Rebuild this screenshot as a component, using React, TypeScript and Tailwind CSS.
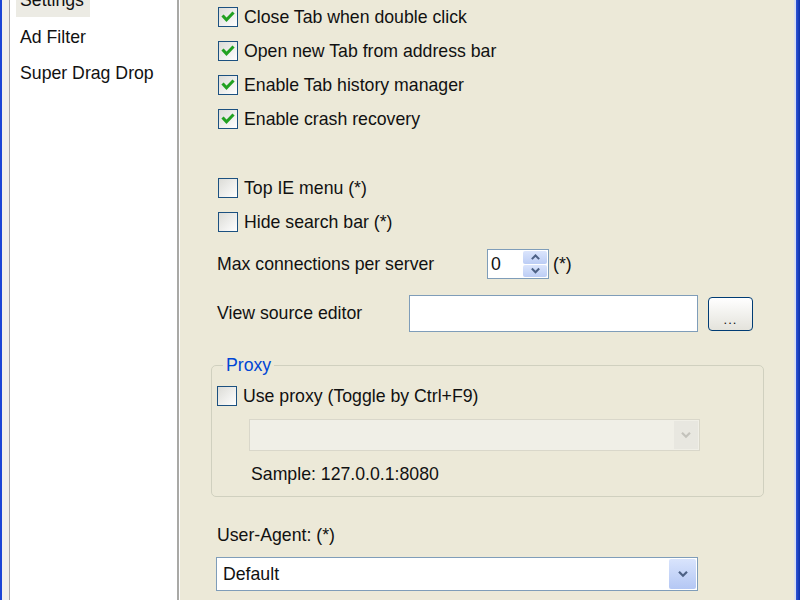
import React from "react";

const FONT = "font-['Liberation_Sans',Arial,sans-serif]";

function CheckBox({ checked = false }: { checked?: boolean }) {
  return (
    <span className="flex h-[20px] w-[20px] shrink-0 items-center justify-center border border-[#1c5180] bg-linear-to-br from-[#dcdcd7] to-white">
      {checked && (
        <svg width="14" height="14" viewBox="0 0 14 14">
          <polyline
            points="2.5,6.5 5.5,9.8 11.5,3.5"
            fill="none"
            stroke="#21a121"
            strokeWidth="3"
            strokeLinecap="square"
          />
        </svg>
      )}
    </span>
  );
}

function CheckRow({ label, checked }: { label: string; checked?: boolean }) {
  return (
    <div className="flex h-[34px] items-center gap-[6px]">
      <CheckBox checked={checked} />
      <span>{label}</span>
    </div>
  );
}

function Chevron({ up = false, color = "#4d6185", size = 12 }: { up?: boolean; color?: string; size?: number }) {
  return (
    <svg width={size} height={size * 0.7} viewBox="0 0 12 8">
      <polyline
        points={up ? "2,6.5 6,2.5 10,6.5" : "2,1.5 6,5.5 10,1.5"}
        fill="none"
        stroke={color}
        strokeWidth="2.2"
      />
    </svg>
  );
}

function SpinBox() {
  return (
    <div className="flex h-[30px] w-[62px] border border-[#7f9db9] bg-white">
      <span className="flex-1 pl-[3px] leading-[28px]">0</span>
      <div className="flex w-[27px] flex-col gap-px border-l border-white p-px">
        <div className="flex flex-1 items-center justify-center rounded-[2px] bg-linear-to-b from-[#dbe5fc] to-[#bccdf5]">
          <Chevron up size={11} />
        </div>
        <div className="flex flex-1 items-center justify-center rounded-[2px] bg-linear-to-b from-[#dbe5fc] to-[#bccdf5]">
          <Chevron size={11} />
        </div>
      </div>
    </div>
  );
}

export default function App() {
  return (
    <div className={`flex h-[600px] w-[800px] overflow-hidden bg-[#ece9d8] text-[17.7px] text-[#111] ${FONT}`}>
      {/* window frame, left */}
      <div className="w-[2px] shrink-0 bg-[#1b45d6]" />
      <div className="w-[7px] shrink-0 bg-[#f1f0ec]" />

      {/* category list */}
      <div className="flex w-[168px] shrink-0 flex-col border-l border-[#a7a6aa] bg-white">
        <div className="-mt-[17px] flex flex-col pl-[6px]">
          <div className="flex h-[34px] items-center">
            <span className="bg-[#ecebe4] pl-[4px] pr-[6px] leading-[34px]">Settings</span>
          </div>
          <div className="mt-[2px] flex h-[36px] items-center px-[4px]">Ad Filter</div>
          <div className="flex h-[36px] items-center px-[4px]">Super Drag Drop</div>
        </div>
      </div>
      <div className="w-[2px] shrink-0 bg-[#a9a9a6]" />
      <div className="w-px shrink-0 bg-white" />

      {/* settings page */}
      <div className="flex flex-1 flex-col pl-[38px]">
        <CheckRow label="Close Tab when double click" checked />
        <CheckRow label="Open new Tab from address bar" checked />
        <CheckRow label="Enable Tab history manager" checked />
        <CheckRow label="Enable crash recovery" checked />

        <div className="mt-[35px]">
          <CheckRow label="Top IE menu (*)" />
          <CheckRow label="Hide search bar (*)" />
        </div>

        <div className="-ml-[1px] mt-[10px] flex h-[30px] items-center">
          <span className="w-[270px]">Max connections per server</span>
          <SpinBox />
          <span className="ml-[4px]">(*)</span>
        </div>

        <div className="-ml-[1px] mt-[16px] flex h-[37px] items-center">
          <span className="w-[192px]">View source editor</span>
          <div className="h-[37px] w-[289px] border border-[#7f9db9] bg-white" />
          <button className="ml-[10px] flex h-[34px] w-[45px] items-end justify-center rounded-[4px] border border-[#003c74] bg-linear-to-b from-white to-[#e4e3dc] pb-[4px] text-[13px] leading-none tracking-[1px]">
            ...
          </button>
        </div>

        <fieldset className="-ml-[7px] mt-[23px] h-[142px] w-[553px] rounded-[5px] border border-[#d0d0bf] px-[5px]">
          <legend className="ml-[6px] px-[3px] leading-[20px] text-[#0046d5]">Proxy</legend>
          <div className="mt-[4px] flex h-[34px] items-center gap-[6px]">
            <CheckBox />
            <span>Use proxy (Toggle by Ctrl+F9)</span>
          </div>
          <div className="ml-[32px] mt-[6px] flex h-[32px] w-[451px] border border-[#d9d7ca] bg-[#f0efe7] p-px">
            <div className="flex-1" />
            <div className="flex w-[24px] items-center justify-center bg-[#e8e7e0]">
              <Chevron color="#c3c2bb" />
            </div>
          </div>
          <div className="ml-[34px] mt-[12px] leading-[22px]">Sample: 127.0.0.1:8080</div>
        </fieldset>

        <div className="-ml-[1px] mt-[28px] leading-[20px]">User-Agent: (*)</div>
        <div className="-ml-[2px] mt-[12px] flex h-[34px] w-[482px] border border-[#7f9db9] bg-white p-px">
          <span className="flex-1 pl-[5px] leading-[30px]">Default</span>
          <div className="flex w-[27px] items-center justify-center rounded-[2px] bg-linear-to-b from-[#d9e4fc] to-[#b4c7f4]">
            <Chevron />
          </div>
        </div>
      </div>

      {/* window frame, right */}
      <div className="w-[2px] shrink-0 bg-[#d8def0]" />
      <div className="w-[4px] shrink-0 bg-linear-to-r from-[#2e55d8] to-[#0a2fa8]" />
    </div>
  );
}
